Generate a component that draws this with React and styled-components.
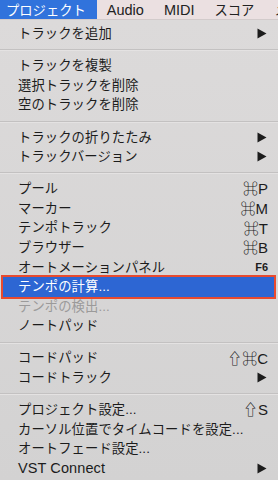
import React from "react";
import styled, { createGlobalStyle } from "styled-components";

const GlobalStyle = createGlobalStyle`
  html, body {
    margin: 0;
    padding: 0;
    width: 278px;
    height: 480px;
    overflow: hidden;
    background: #d9d7d7;
  }
  body {
    font-family: "Liberation Sans", "Noto Sans CJK JP", sans-serif;
    -webkit-font-smoothing: antialiased;
  }
`;

// メニューバーの項目
const barItems = [
  { label: "プロジェクト", active: true },
  { label: "Audio", latin: true },
  { label: "MIDI", latin: true },
  { label: "スコア" },
  { label: "メ" },
];

// プルダウンメニューの内容
const groups = [
  [{ label: "トラックを追加", sub: true }],
  [
    { label: "トラックを複製" },
    { label: "選択トラックを削除" },
    { label: "空のトラックを削除" },
  ],
  [
    { label: "トラックの折りたたみ", sub: true },
    { label: "トラックバージョン", sub: true },
  ],
  [
    { label: "プール", key: "⌘P" },
    { label: "マーカー", key: "⌘M" },
    { label: "テンポトラック", key: "⌘T" },
    { label: "ブラウザー", key: "⌘B" },
    { label: "オートメーションパネル", key: "F6", small: true },
    { label: "テンポの計算...", selected: true },
    { label: "テンポの検出...", disabled: true },
    { label: "ノートパッド" },
  ],
  [
    { label: "コードパッド", key: "⇧⌘C" },
    { label: "コードトラック", sub: true },
  ],
  [
    { label: "プロジェクト設定...", key: "⇧S" },
    { label: "カーソル位置でタイムコードを設定..." },
    { label: "オートフェード設定..." },
    { label: "VST Connect", sub: true, latin: true },
  ],
];

const Arrow = () => (
  <svg width="10" height="11" viewBox="0 0 10 11">
    <path d="M0.5 0.5 L9.5 5.5 L0.5 10.5 Z" fill="#1c1c1c" />
  </svg>
);

const App = () => {
  return (
    <Screen>
      <GlobalStyle />
      <MenuBar>
        {barItems.map((item) => (
          <BarItem key={item.label} $active={item.active} $latin={item.latin}>
            {item.label}
          </BarItem>
        ))}
      </MenuBar>

      <Dropdown>
        {groups.map((group, gi) => (
          <React.Fragment key={gi}>
            {gi > 0 && <Separator />}
            {group.map((item) => (
              <Row
                key={item.label}
                $selected={item.selected}
                $disabled={item.disabled}
              >
                <Label $latin={item.latin}>{item.label}</Label>
                {item.key && <Shortcut $small={item.small}>{item.key}</Shortcut>}
                {item.sub && (
                  <ArrowBox>
                    <Arrow />
                  </ArrowBox>
                )}
              </Row>
            ))}
          </React.Fragment>
        ))}
      </Dropdown>
    </Screen>
  );
};

const Screen = styled.div`
  width: 278px;
  height: 480px;
  display: flex;
  flex-direction: column;
  overflow: hidden;
`;

const MenuBar = styled.div`
  display: flex;
  align-items: stretch;
  flex: 0 0 20px;
  background: #ebe0e1;
  border-bottom: 1px solid #d2cbcb;
  box-sizing: border-box;
  white-space: nowrap;
  overflow: hidden;
`;

const BarItem = styled.div`
  display: flex;
  align-items: center;
  flex-shrink: 0;
  padding: ${(p) => (p.$active ? "0 11px 0 6px" : "0 10px")};
  font-size: ${(p) => (p.$latin ? "14.5px" : "13.3px")};
  color: ${(p) => (p.$active ? "#ffffff" : "#222222")};
  background: ${(p) => (p.$active ? "#3173dc" : "transparent")};
`;

const Dropdown = styled.div`
  flex: 1;
  display: flex;
  flex-direction: column;
  padding-top: 4px;
  background: linear-gradient(#dcdada, #d3d2d2);
`;

const Row = styled.div`
  display: flex;
  align-items: center;
  flex: 0 0 19.6px;
  padding: 0 10px 0 18px;
  box-sizing: border-box;
  font-size: 13.3px;
  color: ${(p) =>
    p.$selected ? "#ffffff" : p.$disabled ? "#9b9a9a" : "#1c1c1c"};
  background: ${(p) => (p.$selected ? "#2d66d3" : "transparent")};
  ${(p) =>
    p.$selected &&
    `
    margin: 0 4px 0 3px;
    padding-left: 15px;
    outline: 2px solid #e84a2e;
  `}
`;

const Label = styled.span`
  flex: 1;
  white-space: nowrap;
  line-height: 1;
  letter-spacing: 0.1px;
  font-size: ${(p) => (p.$latin ? "14.5px" : "inherit")};
`;

const Shortcut = styled.span`
  font-size: ${(p) => (p.$small ? "11px" : "15px")};
  font-weight: ${(p) => (p.$small ? "bold" : "normal")};
  color: #1c1c1c;
  line-height: 1;
`;

const ArrowBox = styled.span`
  display: flex;
  align-items: center;
  padding-right: 1px;
`;

const Separator = styled.div`
  flex: 0 0 12.5px;
  display: flex;
  align-items: center;

  &::before {
    content: "";
    flex: 1;
    height: 1px;
    background: #c3c1c1;
    box-shadow: 0 1px 0 #e4e2e2;
  }
`;

export default App;
